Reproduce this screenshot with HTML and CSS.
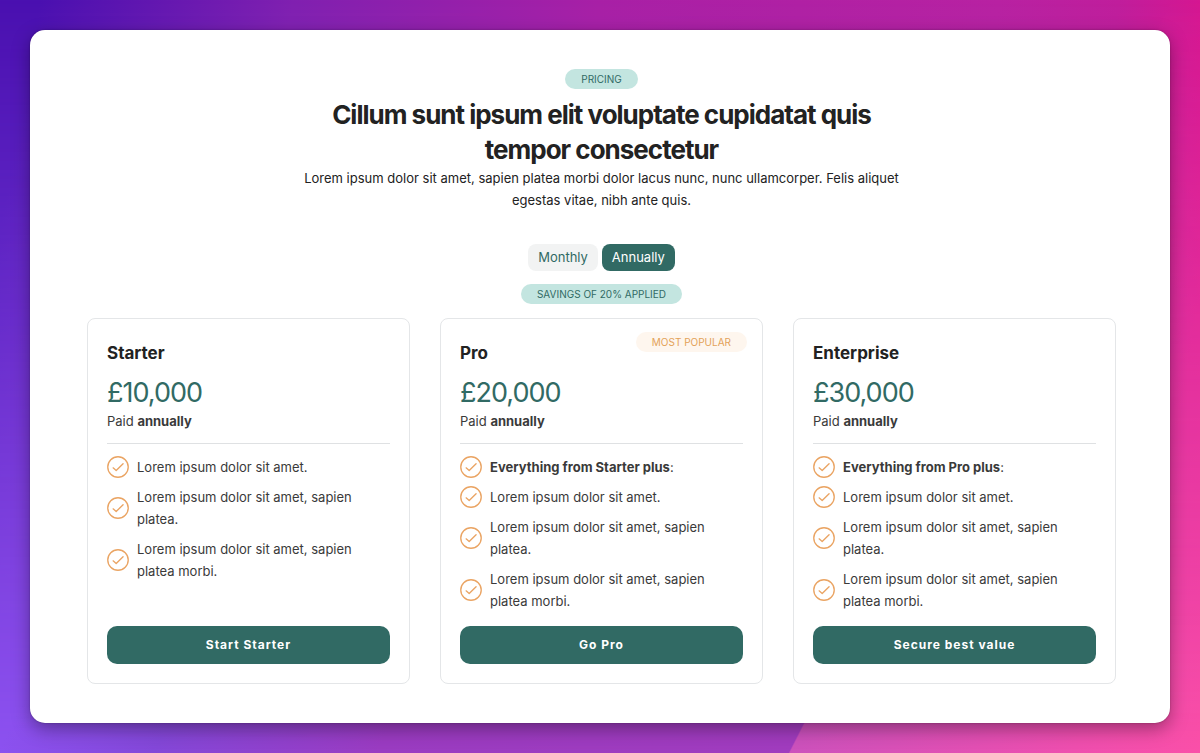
FILE: index.html
```html
<!DOCTYPE html>
<html lang="en">
<head>
<meta charset="utf-8">
<meta name="viewport" content="width=device-width, initial-scale=1">
<title>Pricing</title>
<link rel="stylesheet" href="styles.css">
</head>
<body>
<svg class="sprite" aria-hidden="true">
  <symbol id="tick" viewBox="0 0 23 23" fill="none" stroke="currentColor" stroke-linecap="round" stroke-linejoin="round">
    <circle cx="11.5" cy="11.5" r="10.7" stroke-width="1.4" />
    <path d="M6.4 12.4 9.6 15.2 16.8 8" stroke-width="1.4" />
  </symbol>
</svg>
<main class="panel">
  <header class="intro">
    <span class="pill">PRICING</span>
    <h1 class="headline">Cillum sunt ipsum elit voluptate cupidatat quis tempor consectetur</h1>
    <p class="lead">Lorem ipsum dolor sit amet, sapien platea morbi dolor lacus nunc, nunc ullamcorper. Felis aliquet egestas vitae, nibh ante quis.</p>
  </header>
  <div class="billing">
    <div class="toggle">
      <button class="period" type="button" aria-pressed="false">Monthly</button>
      <button class="period period-active" type="button" aria-pressed="true">Annually</button>
    </div>
    <span class="pill">SAVINGS OF 20% APPLIED</span>
  </div>
  <div class="plans">
    <section class="card">
      <h2 class="name">Starter</h2>
      <p class="price">£10,000</p>
      <p class="paid">Paid <strong>annually</strong></p>
      <ul class="features">
        <li class="feature"><svg class="tick"><use href="#tick"/></svg><span>Lorem ipsum dolor sit amet.</span></li>
        <li class="feature"><svg class="tick"><use href="#tick"/></svg><span>Lorem ipsum dolor sit amet, sapien platea.</span></li>
        <li class="feature"><svg class="tick"><use href="#tick"/></svg><span>Lorem ipsum dolor sit amet, sapien platea morbi.</span></li>
      </ul>
      <button class="action" type="button">Start Starter</button>
    </section>
    <section class="card">
      <span class="pill popular">MOST POPULAR</span>
      <h2 class="name">Pro</h2>
      <p class="price">£20,000</p>
      <p class="paid">Paid <strong>annually</strong></p>
      <ul class="features">
        <li class="feature"><svg class="tick"><use href="#tick"/></svg><span><strong>Everything from Starter plus</strong>:</span></li>
        <li class="feature"><svg class="tick"><use href="#tick"/></svg><span>Lorem ipsum dolor sit amet.</span></li>
        <li class="feature"><svg class="tick"><use href="#tick"/></svg><span>Lorem ipsum dolor sit amet, sapien platea.</span></li>
        <li class="feature"><svg class="tick"><use href="#tick"/></svg><span>Lorem ipsum dolor sit amet, sapien platea morbi.</span></li>
      </ul>
      <button class="action" type="button">Go Pro</button>
    </section>
    <section class="card">
      <h2 class="name">Enterprise</h2>
      <p class="price">£30,000</p>
      <p class="paid">Paid <strong>annually</strong></p>
      <ul class="features">
        <li class="feature"><svg class="tick"><use href="#tick"/></svg><span><strong>Everything from Pro plus</strong>:</span></li>
        <li class="feature"><svg class="tick"><use href="#tick"/></svg><span>Lorem ipsum dolor sit amet.</span></li>
        <li class="feature"><svg class="tick"><use href="#tick"/></svg><span>Lorem ipsum dolor sit amet, sapien platea.</span></li>
        <li class="feature"><svg class="tick"><use href="#tick"/></svg><span>Lorem ipsum dolor sit amet, sapien platea morbi.</span></li>
      </ul>
      <button class="action" type="button">Secure best value</button>
    </section>
  </div>
</main>
</body>
</html>
```
FILE: styles.css
```css
* { box-sizing: border-box; }

body {
  position: relative;
  margin: 0;
  min-height: 100vh;
  padding: 30px;
  font-family: Inter, "Liberation Sans", sans-serif;
  font-size: 13px;
  line-height: 22px;
  color: #3a3a3a;
  background: linear-gradient(100deg, #4a10b0 3%, #8020b0 22%, #a820a6 45%, #b822a2 75%, #c01e9c 84%, #e3128a 94%);
}

/* Lighter lower half of the backdrop, faded in towards the bottom */
body::before {
  content: "";
  position: absolute;
  inset: 0;
  background:
    linear-gradient(117deg, transparent 74%, #cc52bc 74.1%, #ee4fae 92%, #fa50a8 100%),
    linear-gradient(117deg, #8c52f0 24%, #8448d8 34%, #9a3cc2 48%, #a03cbe 74%);
  mask-image: linear-gradient(transparent, #000);
}

h1, h2, p, ul { margin: 0; padding: 0; }

.sprite { position: absolute; width: 0; height: 0; }

.panel {
  position: relative;
  padding: 39px 54px 39px 57px;
  border-radius: 15px;
  background: #fff;
  box-shadow: 0 6px 18px rgba(0, 0, 0, 0.35), 0 0 2px rgba(0, 0, 0, 0.3);
}

.intro, .billing {
  display: flex;
  flex-direction: column;
  align-items: center;
  text-align: center;
}

.pill {
  padding: 0 16px;
  border-radius: 10px;
  background: #c3e5e0;
  color: #316a64;
  font-size: 10px;
  line-height: 20px;
}

.headline {
  max-width: 600px;
  margin-top: 8px;
  font-size: 26px;
  line-height: 35px;
  letter-spacing: -1px;
  color: #222;
}

.lead { max-width: 620px; color: #222; }

.billing { margin-top: 33px; gap: 13px; }

.toggle { display: flex; gap: 4px; }

.period {
  padding: 0 10px;
  border: 0;
  border-radius: 8px;
  background: #f2f3f3;
  color: #316a64;
  font: inherit;
  line-height: 27px;
}

.period-active { background: #316a64; color: #fff; }

.plans {
  display: grid;
  grid-template-columns: repeat(3, 1fr);
  gap: 30px;
  margin-top: 14px;
}

.card {
  position: relative;
  display: flex;
  flex-direction: column;
  padding: 19px;
  border: 1px solid #e4e6e8;
  border-radius: 8px;
}

.popular {
  position: absolute;
  top: 13px;
  right: 15px;
  background: #fef6ee;
  color: #e3a259;
}

.name {
  margin-top: 3px;
  font-size: 17px;
  line-height: 24px;
  color: #222;
}

.price {
  margin-top: 11px;
  font-size: 27px;
  line-height: 34px;
  letter-spacing: -1px;
  color: #316a64;
}

.paid {
  padding-bottom: 11px;
  border-bottom: 1px solid #dfe1e3;
}

.features {
  display: flex;
  flex-direction: column;
  gap: 8px;
  flex: 1;
  margin: 12px 0 14px;
  list-style: none;
}

.feature { display: flex; align-items: center; gap: 8px; }

.feature span { flex: 0 1 225px; }

.tick { flex: none; width: 22px; height: 22px; color: #eaa463; }

.action {
  height: 38px;
  border: 0;
  border-radius: 10px;
  background: #316a64;
  color: #fff;
  font: inherit;
  font-size: 12px;
  font-weight: 700;
  letter-spacing: 1px;
}
```
